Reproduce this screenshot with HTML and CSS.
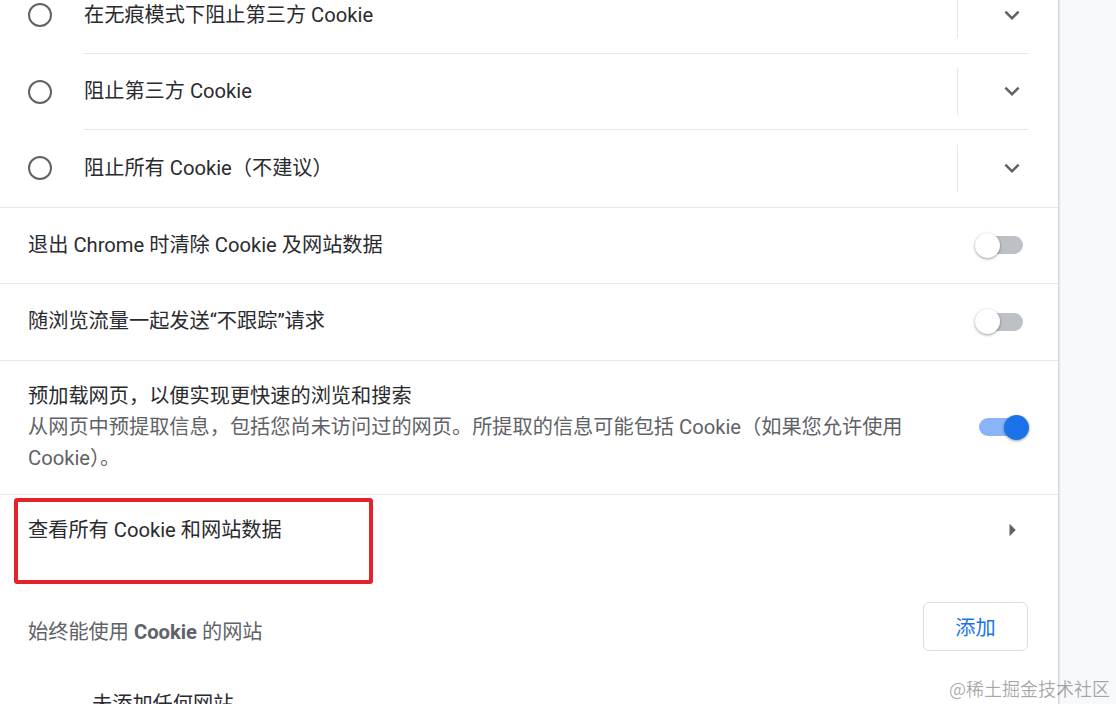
FILE: index.html
```html
<!DOCTYPE html>
<html lang="zh-CN">
<head>
<meta charset="utf-8">
<title>Cookie 设置</title>
<link rel="stylesheet" href="styles.css">
</head>
<body>
<div class="page">
  <div class="radio-group">
    <div class="radio-row">
      <div class="radio-cell"><span class="radio"></span></div>
      <div class="radio-main with-line">
        <div class="radio-label">在无痕模式下阻止第三方 Cookie</div>
        <div class="vsep"></div>
        <div class="expand">
          <svg width="30" height="30" viewBox="0 0 24 24"><path d="M16.59 8.59L12 13.17 7.41 8.59 6 10l6 6 6-6z" fill="#5f6368"/></svg>
        </div>
      </div>
    </div>
    <div class="radio-row">
      <div class="radio-cell"><span class="radio"></span></div>
      <div class="radio-main with-line">
        <div class="radio-label">阻止第三方 Cookie</div>
        <div class="vsep"></div>
        <div class="expand">
          <svg width="30" height="30" viewBox="0 0 24 24"><path d="M16.59 8.59L12 13.17 7.41 8.59 6 10l6 6 6-6z" fill="#5f6368"/></svg>
        </div>
      </div>
    </div>
    <div class="radio-row">
      <div class="radio-cell"><span class="radio"></span></div>
      <div class="radio-main">
        <div class="radio-label">阻止所有 Cookie（不建议）</div>
        <div class="vsep"></div>
        <div class="expand">
          <svg width="30" height="30" viewBox="0 0 24 24"><path d="M16.59 8.59L12 13.17 7.41 8.59 6 10l6 6 6-6z" fill="#5f6368"/></svg>
        </div>
      </div>
    </div>
  </div>

  <div class="row">
    <div class="row-text">退出 Chrome 时清除 Cookie 及网站数据</div>
    <div class="toggle"><span class="track"></span><span class="knob"></span></div>
  </div>

  <div class="row">
    <div class="row-text">随浏览流量一起发送“不跟踪”请求</div>
    <div class="toggle"><span class="track"></span><span class="knob"></span></div>
  </div>

  <div class="row row-tall">
    <div class="row-text">
      <div>预加载网页，以便实现更快速的浏览和搜索</div>
      <div class="secondary">从网页中预提取信息，包括您尚未访问过的网页。所提取的信息可能包括 Cookie（如果您允许使用 Cookie）。</div>
    </div>
    <div class="toggle on"><span class="track"></span><span class="knob"></span></div>
  </div>

  <div class="row row-link">
    <div class="row-text">查看所有 Cookie 和网站数据</div>
    <div class="arrow">
      <svg width="30" height="30" viewBox="0 0 24 24"><path d="M10 7l5 5-5 5z" fill="#5f6368"/></svg>
    </div>
    <div class="highlight"></div>
  </div>

  <div class="section-head">
    <div class="section-title">始终能使用 <span class="strong">Cookie</span> 的网站</div>
    <button class="add-btn">添加</button>
  </div>
  <div class="empty">未添加任何网站</div>
</div>
<div class="watermark">@稀土掘金技术社区</div>
</body>
</html>
```

FILE: styles.css
```css
html, body {
  margin: 0;
  padding: 0;
  height: 100%;
  overflow: hidden;
}

body {
  background: #f8f9fa;
  font-family: Roboto, "Noto Sans CJK SC", sans-serif;
  font-size: 20.2px;
  color: #2a2b2e;
  position: relative;
}

.page {
  width: 1058px;
  margin-top: -23px;
  min-height: 760px;
  background: #ffffff;
  box-shadow: 1px 0 2px rgba(60, 64, 67, 0.28);
}

/* radio group */
.radio-group {
  padding-right: 30px;
}

.radio-row {
  display: flex;
  height: 76.5px;
}

.radio-cell {
  width: 84px;
  flex: none;
  display: flex;
  align-items: center;
  padding-left: 28px;
  box-sizing: border-box;
}

.radio {
  width: 24px;
  height: 24px;
  box-sizing: border-box;
  border: 2.6px solid #5f6368;
  border-radius: 50%;
}

.radio-main {
  flex: 1;
  display: flex;
  align-items: center;
  box-sizing: border-box;
}

.radio-main.with-line {
  border-bottom: 1px solid #e6e7e9;
}

.radio-label {
  flex: 1;
  line-height: 31px;
  padding-top: 1px;
}

.vsep {
  width: 1px;
  height: 47px;
  background: #e6e7e9;
}

.expand {
  width: 70px;
  display: flex;
  justify-content: flex-end;
  padding-right: 1px;
  box-sizing: border-box;
}

.expand svg {
  display: block;
}

/* rows */
.row {
  display: flex;
  align-items: center;
  height: 76.5px;
  padding: 0 35px 0 28px;
  border-top: 1px solid #e6e7e9;
  box-sizing: border-box;
  line-height: 31px;
}

.row-tall {
  height: auto;
  padding-top: 20px;
  padding-bottom: 20px;
}

.row-text {
  flex: 1;
}

.secondary {
  color: #5f6368;
}

.toggle {
  position: relative;
  width: 44px;
  height: 25px;
  margin-left: 30px;
  flex: none;
}

.toggle .track {
  position: absolute;
  left: 0;
  top: 3.5px;
  width: 44px;
  height: 18px;
  border-radius: 9px;
  background: #bdc1c6;
}

.toggle .knob {
  position: absolute;
  left: -4px;
  top: 0;
  width: 25px;
  height: 25px;
  border-radius: 50%;
  background: #ffffff;
  box-shadow: 0 1px 3px rgba(0, 0, 0, 0.4);
}

.toggle.on .track {
  background: #8ab4f8;
}

.toggle.on .knob {
  left: 24.5px;
  background: #1a73e8;
}

.row-link {
  position: relative;
  height: 72px;
  padding-right: 31px;
}

.arrow svg {
  display: block;
}

.highlight {
  position: absolute;
  left: 14px;
  top: 3px;
  width: 359px;
  height: 86px;
  box-sizing: border-box;
  border: 4.5px solid #e5212c;
  border-radius: 3px;
}

/* section */
.section-head {
  display: flex;
  align-items: flex-start;
  padding: 36px 30px 0 28px;
}

.section-title {
  flex: 1;
  color: #5f6368;
  line-height: 31px;
  margin-top: 15.5px;
}

.strong {
  font-weight: 700;
}

.add-btn {
  width: 105px;
  height: 49px;
  border: 1px solid #dadce0;
  border-radius: 6px;
  background: #ffffff;
  color: #1a73e8;
  font-family: Roboto, "Noto Sans CJK SC", sans-serif;
  font-size: 20.2px;
  padding: 0;
}

.empty {
  padding-left: 92px;
  margin-top: 38.5px;
  line-height: 31px;
  color: #2a2b2e;
}

.watermark {
  position: absolute;
  right: 6px;
  bottom: 4px;
  font-family: "Noto Sans CJK SC", sans-serif;
  font-size: 18px;
  line-height: 24px;
  color: rgba(0, 0, 0, 0.34);
}
```
